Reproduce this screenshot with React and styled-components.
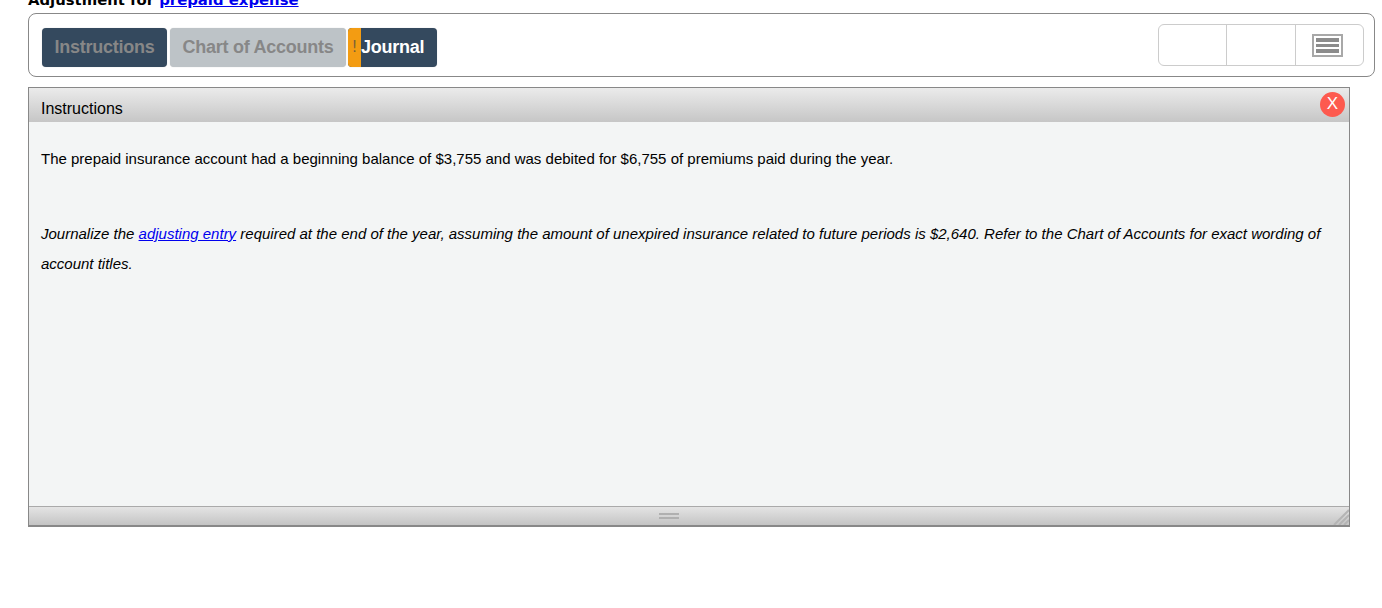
import React from 'react';
import styled, { createGlobalStyle } from 'styled-components';

const Global = createGlobalStyle`
	html, body {
		margin:0;
		padding:0;
		background:#fff;
		overflow:hidden;
	}
	body {
		font-family:"Liberation Sans", Arial, sans-serif;
		color:#000;
	}
`;
const Page = styled.div`
	width:1382px;
	height:608px;
	overflow:hidden;
	padding:0 7px 0 28px;
	box-sizing:border-box;
`;
const Heading = styled.h2`
	margin:-10px 0 0;
	height:23px;
	font-family:"DejaVu Sans", Verdana, sans-serif;
	font-size:14.85px;
	line-height:20px;
	font-weight:700;
`;
const Toolbar = styled.div`
	height:64px;
	box-sizing:border-box;
	border:1px solid #888;
	border-radius:8px;
	padding:0 10px 0 13px;
	display:flex;
	align-items:center;
	justify-content:space-between;
`;
const Tabs = styled.div`
	display:flex;
	align-items:center;
	gap:3px;
	margin-top:4px;
`;
const Tab = styled.button`
	height:39px;
	padding:0;
	width:${p => p.$width}px;
	border:none;
	border-radius:4px;
	background:${p => p.$light ? '#bdc3c7' : '#34495e'};
	color:${p => p.$white ? '#fff' : '#878787'};
	box-shadow:0 0 1px rgba(0,0,0,.25);
	font-family:inherit;
	font-size:18px;
	font-weight:700;
	letter-spacing:-.25px;
	display:flex;
	align-items:center;
	justify-content:center;
	overflow:hidden;
`;
const JournalTab = styled(Tab)`
	margin-left:-1px;
	justify-content:flex-start;
`;
const Alert = styled.span`
	width:13px;
	height:100%;
	background:#f39c12;
	color:#7a6238;
	font-size:16px;
	font-weight:400;
	letter-spacing:0;
	display:flex;
	align-items:center;
	justify-content:center;
`;
const Segments = styled.div`
	width:206px;
	height:42px;
	box-sizing:border-box;
	border:1px solid #ccc;
	border-radius:6px;
	display:grid;
	grid-template-columns:67px 69px 1fr;
`;
const Segment = styled.div`
	display:flex;
	align-items:center;
	justify-content:center;
	padding-right:${p => p.$inset || 0}px;
	& + & {
		border-left:1px solid #ccc;
	}
`;
const Panel = styled.section`
	margin-top:10px;
	width:1322px;
	height:440px;
	box-sizing:border-box;
	border:1px solid #888;
	border-bottom-width:2px;
	display:flex;
	flex-direction:column;
	background:#f3f5f5;
`;
const PanelHeader = styled.header`
	height:34px;
	flex:none;
	box-sizing:border-box;
	padding:7px 4px 0 12px;
	background:linear-gradient(#ebebeb, #c6c6c6);
	display:flex;
	align-items:center;
	justify-content:space-between;
	font-size:16px;
`;
const Close = styled.span`
	width:25px;
	height:25px;
	margin-top:-9px;
	border-radius:50%;
	background:#fd5a4f;
	color:#fff;
	font-size:17px;
	display:flex;
	align-items:center;
	justify-content:center;
`;
const PanelBody = styled.div`
	flex:1;
	padding:22px 12px 0;
	font-size:15px;
	line-height:30px;
`;
const Paragraph = styled.p`
	margin:0 0 45px;
	font-style:${p => p.$italic ? 'italic' : 'normal'};
`;
const PanelFooter = styled.footer`
	height:19px;
	flex:none;
	box-sizing:border-box;
	border-top:1px solid #aaa;
	background:linear-gradient(#e4e4e4, #c4c4c4);
	display:flex;
	align-items:center;
	justify-content:center;
	position:relative;
`;
const Grip = styled.span`
	width:20px;
	height:2px;
	margin-right:40px;
	border-top:2px solid #b0b0b0;
	border-bottom:2px solid #b0b0b0;
`;
const Resize = styled.svg`
	position:absolute;
	right:0;
	bottom:0;
`;

function ListIcon() {
	return (
		<svg width="31" height="23" viewBox="0 0 31 23">
			<rect x="1" y="1" width="29" height="21" fill="#fff" stroke="#a8a8a8" strokeWidth="2"/>
			<rect x="4" y="4" width="23" height="4" fill="#8c8c8c"/>
			<rect x="4" y="10" width="23" height="3" fill="#8c8c8c"/>
			<rect x="4" y="15" width="23" height="4" fill="#8c8c8c"/>
		</svg>
	);
}

export default function App() {
	return (
		<Page>
			<Global/>
			<Heading>Adjustment for <a href="#top">prepaid expense</a></Heading>
			<Toolbar>
				<Tabs>
					<Tab $width={125}>Instructions</Tab>
					<Tab $width={176} $light>Chart of Accounts</Tab>
					<JournalTab $width={89} $white><Alert>!</Alert>Journal</JournalTab>
				</Tabs>
				<Segments>
					<Segment/>
					<Segment/>
					<Segment $inset={4}><ListIcon/></Segment>
				</Segments>
			</Toolbar>
			<Panel>
				<PanelHeader>
					Instructions
					<Close>X</Close>
				</PanelHeader>
				<PanelBody>
					<Paragraph>The prepaid insurance account had a beginning balance of $3,755 and was debited for $6,755 of premiums paid during the year.</Paragraph>
					<Paragraph $italic>Journalize the <a href="#top">adjusting entry</a> required at the end of the year, assuming the amount of unexpired insurance related to future periods is $2,640. Refer to the Chart of Accounts for exact wording of account titles.</Paragraph>
				</PanelBody>
				<PanelFooter>
					<Grip/>
					<Resize width="16" height="16" viewBox="0 0 16 16">
						<path d="M1 16L16 1M6 16L16 6M11 16L16 11" stroke="#b4b4b4" strokeWidth="2"/>
					</Resize>
				</PanelFooter>
			</Panel>
		</Page>
	);
}
